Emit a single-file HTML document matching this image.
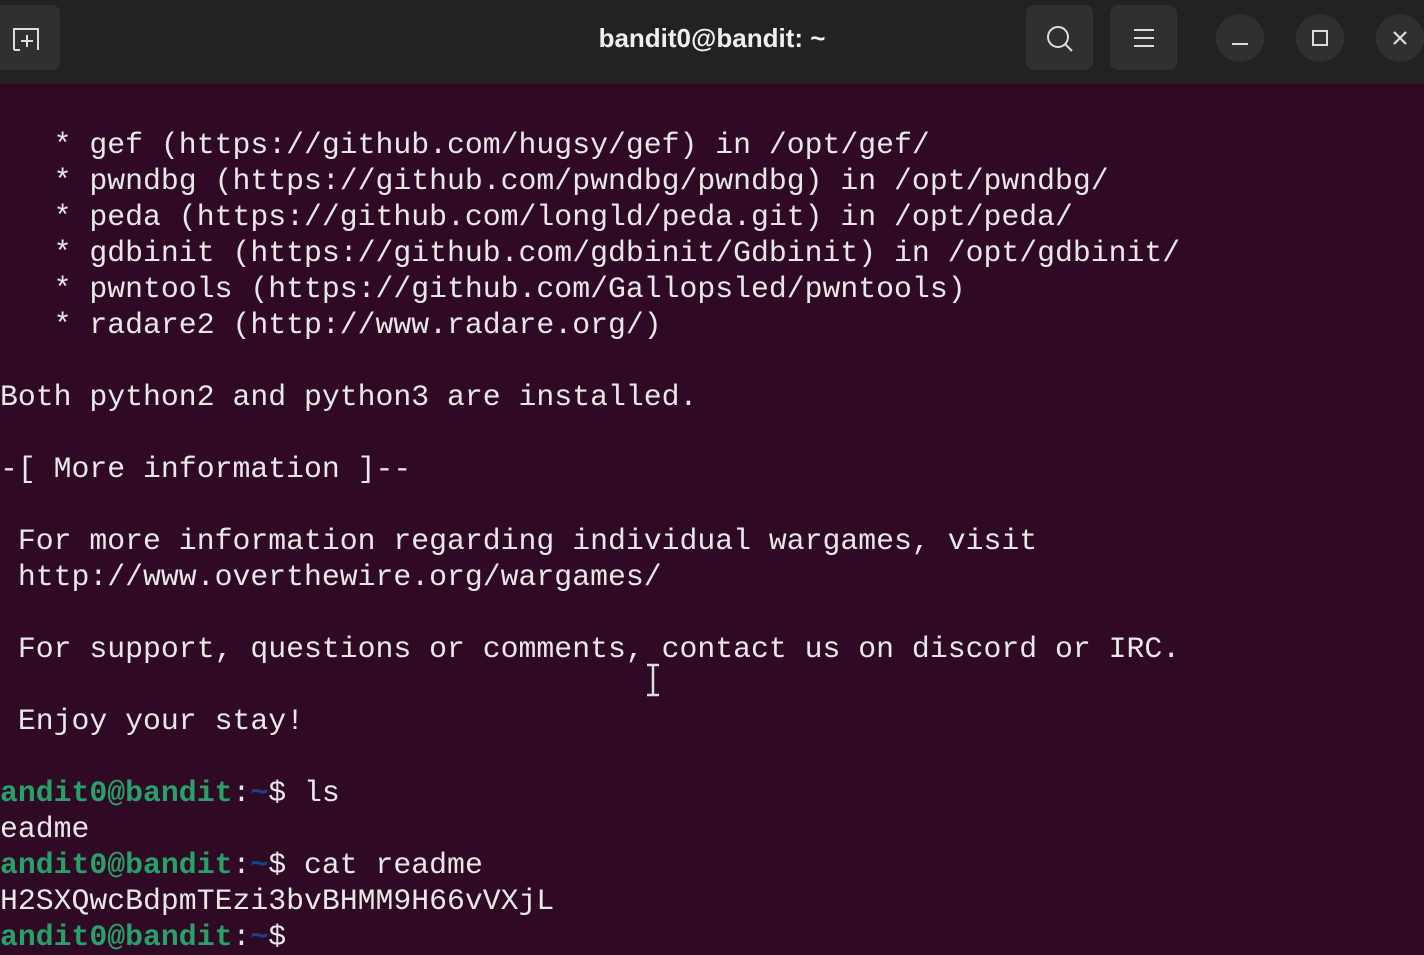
<!DOCTYPE html>
<html><head><meta charset="utf-8"><style>
html,body{margin:0;padding:0;width:1424px;height:954px;overflow:hidden;background:#300a24;}
.bar{position:absolute;left:0;top:0;width:1424px;height:84px;background:#222222;}
.btn{position:absolute;top:5px;height:65px;background:#303030;border-radius:8px;}
.circ{position:absolute;top:14px;width:48px;height:48px;border-radius:50%;background:#303030;}
.title{position:absolute;top:23px;left:0;width:1424px;text-align:center;color:#f0f0f0;font:bold 26px "Liberation Sans",sans-serif;}
pre{position:absolute;left:0;top:127px;margin:0;font-family:"Liberation Mono",monospace;font-size:29.8px;line-height:36px;color:#e8e8e8;}
.g{color:#26a269;font-weight:bold}.b{color:#12488b;font-weight:bold}
</style></head><body>
<div class="bar">
<div class="btn" style="left:-10px;width:70px"></div>
<svg style="position:absolute;left:12px;top:26px" width="30" height="26" viewBox="0 0 30 26"><path d="M2 24V3h24v21M2 24h6" fill="none" stroke="#ddd" stroke-width="2"/><path d="M15 9v12M9 15h12" stroke="#ddd" stroke-width="2"/></svg>
<div class="title">bandit0@bandit: ~</div>
<div class="btn" style="left:1026px;width:67px"></div>
<svg style="position:absolute;left:1045px;top:24px" width="30" height="30"><circle cx="13" cy="13" r="10" fill="none" stroke="#ddd" stroke-width="2"/><path d="M20 20l7 7" stroke="#ddd" stroke-width="2"/></svg>
<div class="btn" style="left:1110px;width:67px"></div>
<svg style="position:absolute;left:1133px;top:27px" width="22" height="22"><path d="M1 3h20M1 11h20M1 19h20" stroke="#ddd" stroke-width="2"/></svg>
<div class="circ" style="left:1216px"></div>
<svg style="position:absolute;left:1230px;top:30px" width="20" height="20"><path d="M2 14h16" stroke="#ddd" stroke-width="2"/></svg>
<div class="circ" style="left:1296px"></div>
<svg style="position:absolute;left:1310px;top:28px" width="20" height="20"><rect x="3" y="3" width="14" height="14" fill="none" stroke="#ddd" stroke-width="2"/></svg>
<div class="circ" style="left:1376px"></div>
<svg style="position:absolute;left:1390px;top:28px" width="20" height="20"><path d="M4 4l12 12M16 4L4 16" stroke="#ddd" stroke-width="2.2"/></svg>
</div>
<pre>   * gef (https://github.com/hugsy/gef) in /opt/gef/
   * pwndbg (https://github.com/pwndbg/pwndbg) in /opt/pwndbg/
   * peda (https://github.com/longld/peda.git) in /opt/peda/
   * gdbinit (https://github.com/gdbinit/Gdbinit) in /opt/gdbinit/
   * pwntools (https://github.com/Gallopsled/pwntools)
   * radare2 (http://www.radare.org/)

Both python2 and python3 are installed.

-[ More information ]--

 For more information regarding individual wargames, visit
 http://www.overthewire.org/wargames/

 For support, questions or comments, contact us on discord or IRC.

 Enjoy your stay!

<span class="g">andit0@bandit</span>:<span class="b">~</span>$ ls
eadme
<span class="g">andit0@bandit</span>:<span class="b">~</span>$ cat readme
H2SXQwcBdpmTEzi3bvBHMM9H66vVXjL
<span class="g">andit0@bandit</span>:<span class="b">~</span>$ </pre>
<svg style="position:absolute;left:644px;top:663px" width="18" height="34"><path d="M3 2h12M9 2v30M3 32h12" stroke="#ddd" stroke-width="2.5"/></svg>
</body></html>
